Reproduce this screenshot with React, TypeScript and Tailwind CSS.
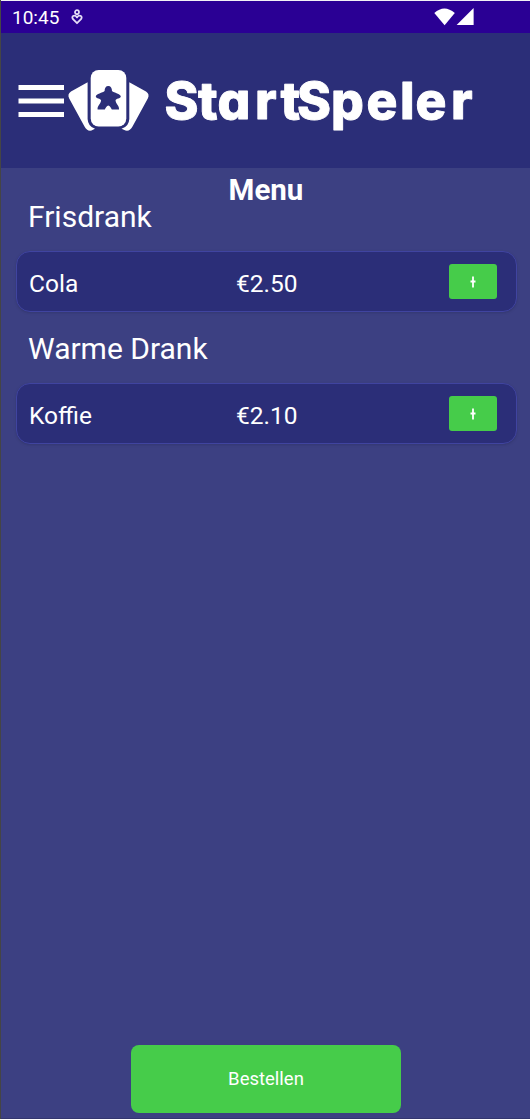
const items = [
  { category: "Frisdrank", name: "Cola", price: "€2.50" },
  { category: "Warme Drank", name: "Koffie", price: "€2.10" },
];

function StatusBar() {
  return (
    <div className="flex h-8 items-center bg-[#2a0094] pl-[11px] pr-14 text-white">
      <span className="pt-0.5 text-[19px] leading-8">10:45</span>
      <svg className="ml-3 h-4 w-3" viewBox="0 0 12 16" fill="none" stroke="#e4dcf6" strokeWidth="1.8">
        <circle cx="6" cy="3.2" r="2" />
        <path d="M6 14.2 2 10.2Q.4 7.8 2.6 6.8 4.6 6.2 6 8.4 7.4 6.2 9.4 6.8 11.6 7.8 10 10.2Z" strokeLinejoin="round" />
      </svg>
      <svg className="ml-auto h-[18px] w-10" viewBox="0 0 40 18" fill="#fff">
        <path d="M.3 5Q10.3-4 20.8 5L10.6 17.3Z" />
        <path d="M39.6 0V17H22.6Z" />
      </svg>
    </div>
  );
}

function Header() {
  return (
    <header className="h-[135px] bg-[#2b2e78]">
      <svg className="block h-[135px] w-[529px]" viewBox="1 33 529 135" fill="#fff">
        <path d="M18.5 85h45.5v5h-45.5zM18.5 98.500h45.500v5h-45.500zM18.500 112h45.500v5h-45.500z" />
        <path d="M87.600 82.300 71 91.500Q67 94 69.200 98.500L84.500 126.500Q87 131.500 91.500 130.500L95 128.800Q88 126.500 87.600 119Z" />
        <path d="M129.300 82.300 146 91.500Q150 94 147.800 98.500L132.500 126.500Q130 131.500 125.500 130.500L121.500 128.800Q129 126.500 129.300 119Z" />
        <rect x="90.700" y="70" width="35.600" height="56.500" rx="8" />
        <path
          fill="#2b2e78"
          d="M108.300 86C110.800 86 112 88 112 91 114 93 120.500 93.500 120.800 96.500 120.500 99 116 98 115.500 100.500 116 104 119.500 106 119 109.500H111.800C111 107.800 109.800 105.800 108.300 105.400 106.800 105.800 105.600 107.800 104.800 109.500H97.600C97.100 106 100.600 104 101.100 100.500 100.600 98 96.100 99 95.800 96.500 96.100 93.500 102.600 93 104.600 91 104.600 88 105.800 86 108.300 86Z"
        />
        <text
          x="164.500 198 217.500 255 280.500 297 331 366.500 400 415.500 451"
          y="119"
          fontSize="51.5"
          stroke="#fff"
          strokeWidth="0.9"
          strokeLinejoin="round"
          className="font-['Inter'] font-extrabold [font-feature-settings:'cv11'_1]"
        >
          StartSpeler
        </text>
      </svg>
    </header>
  );
}

export default function App() {
  return (
    <div className="flex h-[1119px] w-[530px] flex-col border-l border-[#454545] bg-[#3c4082] font-['Roboto',sans-serif] text-white">
      <div className="h-px bg-[#f2f2f5]" />
      <StatusBar />
      <Header />
      <main className="flex flex-1 flex-col">
        <h1 className="mt-1 h-9 pl-px text-center text-[29.5px] font-bold leading-9">Menu</h1>
        <div className="-mt-[9px]">
          {items.map((item) => (
            <section key={item.name} className="mb-[19px] pl-[15px] pr-[13px]">
              <h2 className="mb-4 h-9 pl-3 text-[30px] leading-9">{item.category}</h2>
              <div className="grid h-[61px] grid-cols-[207px_1fr_auto] items-center rounded-[14px] border border-[#4044a0] bg-[#2b2e78] pl-3 pr-[19px] text-[24.5px] shadow-sm">
                <span className="pt-1 leading-8">{item.name}</span>
                <span className="pt-1 leading-8">{item.price}</span>
                <button className="flex h-[35px] w-12 items-center justify-center rounded-[3px] bg-[#46cc4a]">
                  <svg className="mt-px h-3 w-1.5" viewBox="0 0 6 12" fill="#fff">
                    <path d="M2.100.5h1.800v4h1.600v2h-1.600v5h-1.800v-5h-1.600v-2h1.600z" />
                  </svg>
                </button>
              </div>
            </section>
          ))}
        </div>
        <button className="mb-[5px] ml-[130px] mt-auto h-[68px] w-[270px] rounded-lg bg-[#46cc4a] pt-0.5 text-[18.5px]">
          Bestellen
        </button>
      </main>
      <div className="h-px bg-[#33366f]" />
    </div>
  );
}
